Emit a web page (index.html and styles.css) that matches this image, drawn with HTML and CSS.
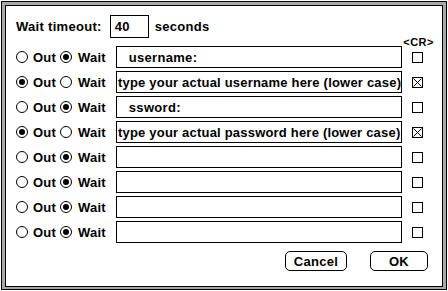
FILE: index.html
```html
<!DOCTYPE html>
<html>
<head>
<meta charset="utf-8">
<link rel="stylesheet" href="styles.css">
</head>
<body>
<div class="dialog">
  <div class="panel">
    <div class="top-row">
      <span class="label">Wait timeout:</span>
      <span class="num-box">40</span>
      <span class="label">seconds</span>
    </div>
    <div class="cr-row"><span class="cr">&lt;CR&gt;</span></div>

    <div class="row">
      <span class="opt opt-out"><span class="radio"></span>Out</span>
      <span class="opt opt-wait"><span class="radio on"></span>Wait</span>
      <span class="field">&nbsp;&nbsp;username:</span>
      <span class="check"></span>
    </div>
    <div class="row">
      <span class="opt opt-out"><span class="radio on"></span>Out</span>
      <span class="opt opt-wait"><span class="radio"></span>Wait</span>
      <span class="field tight">type your actual username here (lower case)</span>
      <span class="check on"><svg width="9" height="9" viewBox="0 0 9 9"><path d="M0.5 0.5L8.5 8.5M8.5 0.5L0.5 8.5" stroke="#000" stroke-width="1"/></svg></span>
    </div>
    <div class="row">
      <span class="opt opt-out"><span class="radio"></span>Out</span>
      <span class="opt opt-wait"><span class="radio on"></span>Wait</span>
      <span class="field">&nbsp;&nbsp;ssword:</span>
      <span class="check"></span>
    </div>
    <div class="row">
      <span class="opt opt-out"><span class="radio on"></span>Out</span>
      <span class="opt opt-wait"><span class="radio"></span>Wait</span>
      <span class="field tight">type your actual password here (lower case)</span>
      <span class="check on"><svg width="9" height="9" viewBox="0 0 9 9"><path d="M0.5 0.5L8.5 8.5M8.5 0.5L0.5 8.5" stroke="#000" stroke-width="1"/></svg></span>
    </div>
    <div class="row">
      <span class="opt opt-out"><span class="radio"></span>Out</span>
      <span class="opt opt-wait"><span class="radio on"></span>Wait</span>
      <span class="field"></span>
      <span class="check"></span>
    </div>
    <div class="row">
      <span class="opt opt-out"><span class="radio"></span>Out</span>
      <span class="opt opt-wait"><span class="radio on"></span>Wait</span>
      <span class="field"></span>
      <span class="check"></span>
    </div>
    <div class="row">
      <span class="opt opt-out"><span class="radio"></span>Out</span>
      <span class="opt opt-wait"><span class="radio on"></span>Wait</span>
      <span class="field"></span>
      <span class="check"></span>
    </div>
    <div class="row">
      <span class="opt opt-out"><span class="radio"></span>Out</span>
      <span class="opt opt-wait"><span class="radio on"></span>Wait</span>
      <span class="field"></span>
      <span class="check"></span>
    </div>

    <div class="buttons">
      <span class="btn btn-cancel">Cancel</span>
      <span class="btn btn-ok">OK</span>
    </div>
  </div>
</div>
</body>
</html>
```

FILE: styles.css
```css
* { box-sizing: border-box; }
html, body {
  margin: 0;
  padding: 0;
  background: #fff;
  width: 448px;
  height: 291px;
  overflow: hidden;
}
body {
  padding: 1px 0 0 1px;
  font-family: "Liberation Sans", Arial, sans-serif;
  font-weight: bold;
  font-size: 13px;
  letter-spacing: 0.3px;
  color: #000;
}
.dialog {
  width: 446px;
  height: 289px;
  border: 1px solid #000;
  background: #a8a8a8;
  padding: 3px;
}
.panel {
  width: 438px;
  height: 282px;
  border: 1px solid #000;
  background: #fff;
  padding: 9px 0 0 10px;
}
.top-row {
  display: flex;
  align-items: center;
  height: 23px;
}
.num-box {
  width: 39px;
  height: 23px;
  border: 1px solid #000;
  margin: 0 6px 0 8px;
  padding-left: 4px;
  display: flex;
  align-items: center;
}
.cr-row {
  height: 8px;
  display: flex;
  justify-content: flex-end;
  padding-right: 8px;
}
.cr {
  font-size: 11px;
  line-height: 8px;
  letter-spacing: 0.5px;
}
.row {
  display: flex;
  align-items: center;
  height: 22px;
  margin-bottom: 3px;
}
.opt {
  display: flex;
  align-items: center;
  gap: 5px;
  letter-spacing: 0.2px;
}
.opt-out { width: 44px; }
.opt-wait { width: 56px; gap: 6px; }
.radio {
  width: 12px;
  height: 12px;
  border: 1px solid #000;
  border-radius: 50%;
  display: flex;
  align-items: center;
  justify-content: center;
  flex: none;
}
.radio.on::after {
  content: "";
  width: 6px;
  height: 6px;
  border-radius: 50%;
  background: #000;
}
.field {
  width: 286px;
  height: 22px;
  border: 1px solid #000;
  padding-left: 4px;
  display: flex;
  align-items: center;
  white-space: pre;
  overflow: hidden;
}
.field.tight {
  padding-left: 1px;
  letter-spacing: 0.2px;
}
.check {
  width: 11px;
  height: 11px;
  border: 1px solid #000;
  margin-left: 10px;
  display: flex;
  align-items: center;
  justify-content: center;
}
.check svg { display: block; }
.buttons {
  display: flex;
  justify-content: flex-end;
  gap: 23px;
  padding-right: 14px;
  margin-top: 8px;
}
.btn {
  height: 20px;
  border: 1px solid #000;
  border-radius: 5px;
  display: flex;
  align-items: center;
  justify-content: center;
}
.btn-cancel { width: 62px; }
.btn-ok { width: 58px; }
```
